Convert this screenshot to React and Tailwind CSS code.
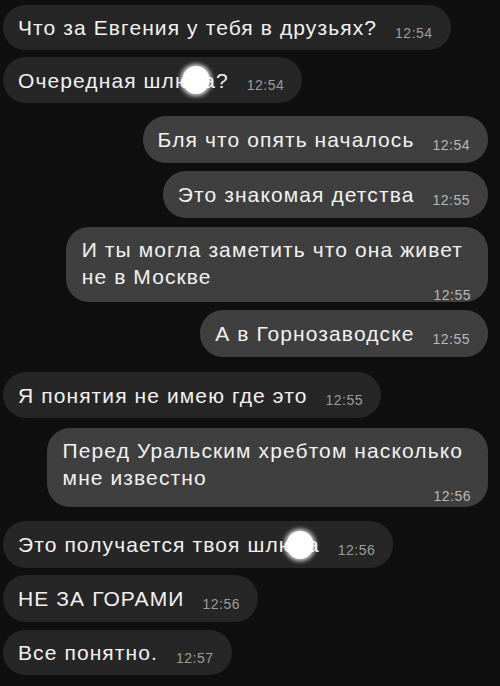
import React from "react";

const messages = [
  { out: false, lines: ["Что за Евгения у тебя в друзьях?"], time: "12:54", mt: "mt-[5px]", h: "h-[45px]" },
  { out: false, lines: [["Очередная шлю", "х", "а?"]], time: "12:54", mt: "mt-[7px]", h: "h-[46px]" },
  { out: true, lines: ["Бля что опять началось"], time: "12:54", mt: "mt-[13px]", h: "h-[47px]" },
  { out: true, lines: ["Это знакомая детства"], time: "12:55", mt: "mt-[8px]", h: "h-[47px]" },
  { out: true, lines: ["И ты могла заметить что она живет", "не в Москве"], time: "12:55", mt: "mt-[9px]", h: "h-[75px]" },
  { out: true, lines: ["А в Горнозаводске"], time: "12:55", mt: "mt-[8px]", h: "h-[47px]" },
  { out: false, lines: ["Я понятия не имею где это"], time: "12:55", mt: "mt-[15px]", h: "h-[46px]" },
  { out: true, lines: ["Перед Уральским хребтом насколько", "мне известно"], time: "12:56", mt: "mt-[10px]", h: "h-[79px]" },
  { out: false, lines: [["Это получается твоя шлю", "х", "а"]], time: "12:56", mt: "mt-[14px]", h: "h-[47px]" },
  { out: false, lines: ["НЕ ЗА ГОРАМИ"], time: "12:56", mt: "mt-[7px]", h: "h-[47px]" },
  { out: false, lines: ["Все понятно."], time: "12:57", mt: "mt-[8px]", h: "h-[45px]" },
];

// white blur blob over the censored letter
const Censored = ({ parts }) => (
  <>
    {parts[0]}
    <span className="relative">
      {parts[1]}
      <span className="absolute left-[40%] top-1/2 -translate-x-1/2 -translate-y-1/2 w-[27px] h-[28px] rounded-full bg-white shadow-[0_0_4px_2px_rgba(255,255,255,0.8)]" />
    </span>
    {parts[2]}
  </>
);

const Line = ({ line }) => (Array.isArray(line) ? <Censored parts={line} /> : line);

const Time = ({ t, out }) => (
  <span className={`text-[14px] leading-none tracking-[0.5px] ${out ? "text-[#b8b8b8]" : "text-[#9c9c9c]"}`}>{t}</span>
);

const Bubble = ({ m }) => {
  const multi = m.lines.length > 1;
  return (
    <div className={`flex ${m.out ? "justify-end pr-[12px]" : "justify-start pl-[3px]"} ${m.mt}`}>
      <div
        className={`${m.h} rounded-[23px] text-[#f2f2f2] text-[21px] tracking-[1.1px] ${
          m.out ? "bg-[#3f3f3f]" : "bg-[#262626]"
        } ${multi ? "pl-[16px] pr-[25px] pt-[9px] flex flex-col" : "pl-[15px] pr-[18px] flex items-center"}`}
      >
        {multi ? (
          <>
            {m.lines.slice(0, -1).map((l, i) => (
              <div key={i} className="leading-[27px]">
                <Line line={l} />
              </div>
            ))}
            <div className="flex justify-between items-start gap-5 leading-[27px] -mr-[8px]">
              <span>
                <Line line={m.lines[m.lines.length - 1]} />
              </span>
              <span className="pt-[16px]">
                <Time t={m.time} out={m.out} />
              </span>
            </div>
          </>
        ) : (
          <>
            <span className="leading-none">
              <Line line={m.lines[0]} />
            </span>
            <span className="ml-[18px] pt-[6px]">
              <Time t={m.time} out={m.out} />
            </span>
          </>
        )}
      </div>
    </div>
  );
};

export default function App() {
  return (
    <div className="w-[500px] h-[686px] overflow-hidden bg-[#0f0f0f] pt-[0px] font-['Liberation_Sans',Arial,sans-serif]">
      {messages.map((m, i) => (
        <Bubble key={i} m={m} />
      ))}
    </div>
  );
}
